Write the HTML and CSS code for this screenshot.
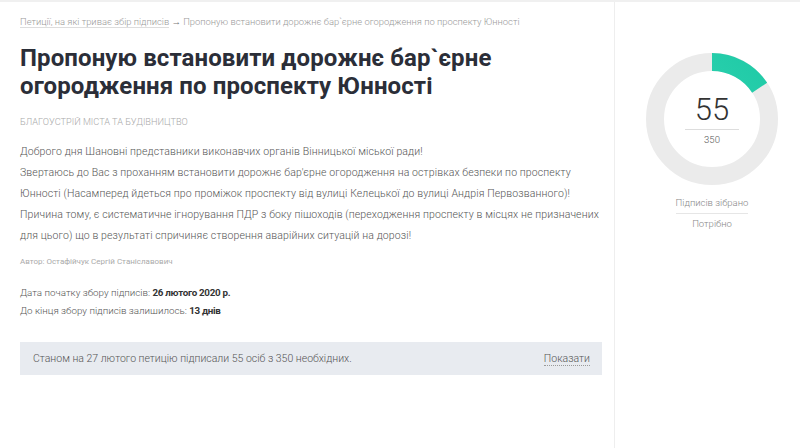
FILE: index.html
```html
<!DOCTYPE html>
<html lang="uk">
<head>
	<meta charset="UTF-8">
	<title>Петиція</title>
	<link rel="stylesheet" href="styles.css">
</head>
<body>
	<div class="page">
		<div class="main">
			<div class="crumbs">
				<a href="" class="crumbs_link">Петиції, на які триває збір підписів</a>
				<span class="crumbs_arrow">&rarr;</span>
				<span>Пропоную встановити дорожнє бар`єрне огородження по проспекту Юнності</span>
			</div>

			<h1 class="title">Пропоную встановити дорожнє бар`єрне огородження по проспекту Юнності</h1>

			<div class="category">Благоустрій міста та будівництво</div>

			<div class="text">
				Доброго дня Шановні представники виконавчих органів Вінницької міської ради!<br>
				Звертаюсь до Вас з проханням встановити дорожнє бар'єрне огородження на острівках безпеки по проспекту Юнності (Насамперед йдеться про проміжок проспекту від вулиці Келецької до вулиці Андрія Первозванного)!<br>
				Причина тому, є систематичне ігнорування ПДР з боку пішоходів (переходження проспекту в місцях не призначених для цього) що в результаті спричиняє створення аварійних ситуацій на дорозі!
			</div>

			<div class="author">Автор: Остафійчук Сергій Станіславович</div>

			<div class="dates">
				<div>Дата початку збору підписів: <b>26 лютого 2020 р.</b></div>
				<div>До кінця збору підписів залишилось: <b>13 днів</b></div>
			</div>

			<div class="status">
				<span>Станом на 27 лютого петицію підписали 55 осіб з 350 необхідних.</span>
				<a href="" class="status_link">Показати</a>
			</div>
		</div>

		<div class="side">
			<div class="donut">
				<svg width="132" height="132" viewBox="0 0 132 132">
					<defs>
						<linearGradient id="teal" x1="0" y1="0" x2="1" y2="1">
							<stop offset="0" stop-color="#3ad8b8"/>
							<stop offset="1" stop-color="#1fcaa6"/>
						</linearGradient>
					</defs>
					<circle cx="66" cy="66" r="57" fill="none" stroke="#ebebeb" stroke-width="18"/>
					<circle cx="66" cy="66" r="57" fill="none" stroke="url(#teal)" stroke-width="18"
						stroke-dasharray="56.3 400" transform="rotate(-90 66 66)"/>
				</svg>
				<div class="donut_in">
					<div class="donut_num">55</div>
					<div class="donut_total">350</div>
				</div>
			</div>
			<div class="legend">
				<div class="legend_top">Підписів зібрано</div>
				<div>Потрібно</div>
			</div>
		</div>
	</div>
</body>
</html>
```

FILE: styles.css
```css
body{
	margin:0;
	padding:0;
	background:#fff;
	font-family:Roboto, "Liberation Sans", sans-serif;
	border-top:2px solid #f0f0f0;
}

.page{
	display:flex;
	width:800px;
	height:446px;
}

.main{
	width:582px;
	padding:13px 12px 0 20px;
	border-right:1px solid #eeeeee;
}

.crumbs{
	font-size:9.4px;
	font-weight:300;
	color:#9a9a9a;
	line-height:14px;
	white-space:nowrap;
}

.crumbs_link{
	color:#9a9a9a;
	text-decoration:none;
	border-bottom:1px solid #ddd;
}

.crumbs_arrow{
	color:#777;
}

.title{
	margin:15px 0 0;
	font-size:24px;
	line-height:28px;
	font-weight:700;
	color:#2b2e38;
	letter-spacing:0.1px;
}

.category{
	margin-top:16px;
	font-size:9.2px;
	text-transform:uppercase;
	color:#aaa;
	font-weight:300;
}

.text{
	width:582px;
	margin-top:14px;
	font-size:10.5px;
	line-height:21px;
	font-weight:300;
	color:#555;
	letter-spacing:0.12px;
}

.author{
	margin-top:11px;
	font-size:8px;
	color:#aaa;
}

.dates{
	margin-top:18px;
	font-size:9.8px;
	line-height:18px;
	font-weight:300;
	color:#555;
}

.dates b{
	color:#333;
	font-weight:700;
	letter-spacing:-0.3px;
}

.status{
	display:flex;
	justify-content:space-between;
	align-items:center;
	margin-top:22px;
	height:33px;
	padding:0 12px 0 13px;
	background-color:#e8ebf0;
	font-size:10.5px;
	font-weight:300;
	color:#555;
}

.status_link{
	color:#555;
	text-decoration:none;
	border-bottom:1px dotted #999;
}

.side{
	flex:1;
	display:flex;
	flex-direction:column;
	align-items:center;
	padding:51px 0 0 9px;
}

.donut{
	position:relative;
	width:132px;
	height:132px;
}

.donut svg{
	display:block;
}

.donut_in{
	position:absolute;
	left:0;
	top:0;
	width:132px;
	height:132px;
	display:flex;
	flex-direction:column;
	align-items:center;
	padding-top:40px;
	box-sizing:border-box;
}

.donut_num{
	font-size:31px;
	font-weight:300;
	color:#333;
	line-height:34px;
	width:54px;
	text-align:center;
	padding-bottom:2px;
	border-bottom:1px solid #ddd;
}

.donut_total{
	margin-top:4px;
	font-size:9.5px;
	color:#555;
	font-weight:300;
}

.legend{
	margin-top:13px;
	font-size:9.5px;
	font-weight:300;
	color:#888;
	text-align:center;
	line-height:10px;
}

.legend_top{
	padding-bottom:5px;
	margin-bottom:5px;
	border-bottom:1px solid #e6e6e6;
}
```
